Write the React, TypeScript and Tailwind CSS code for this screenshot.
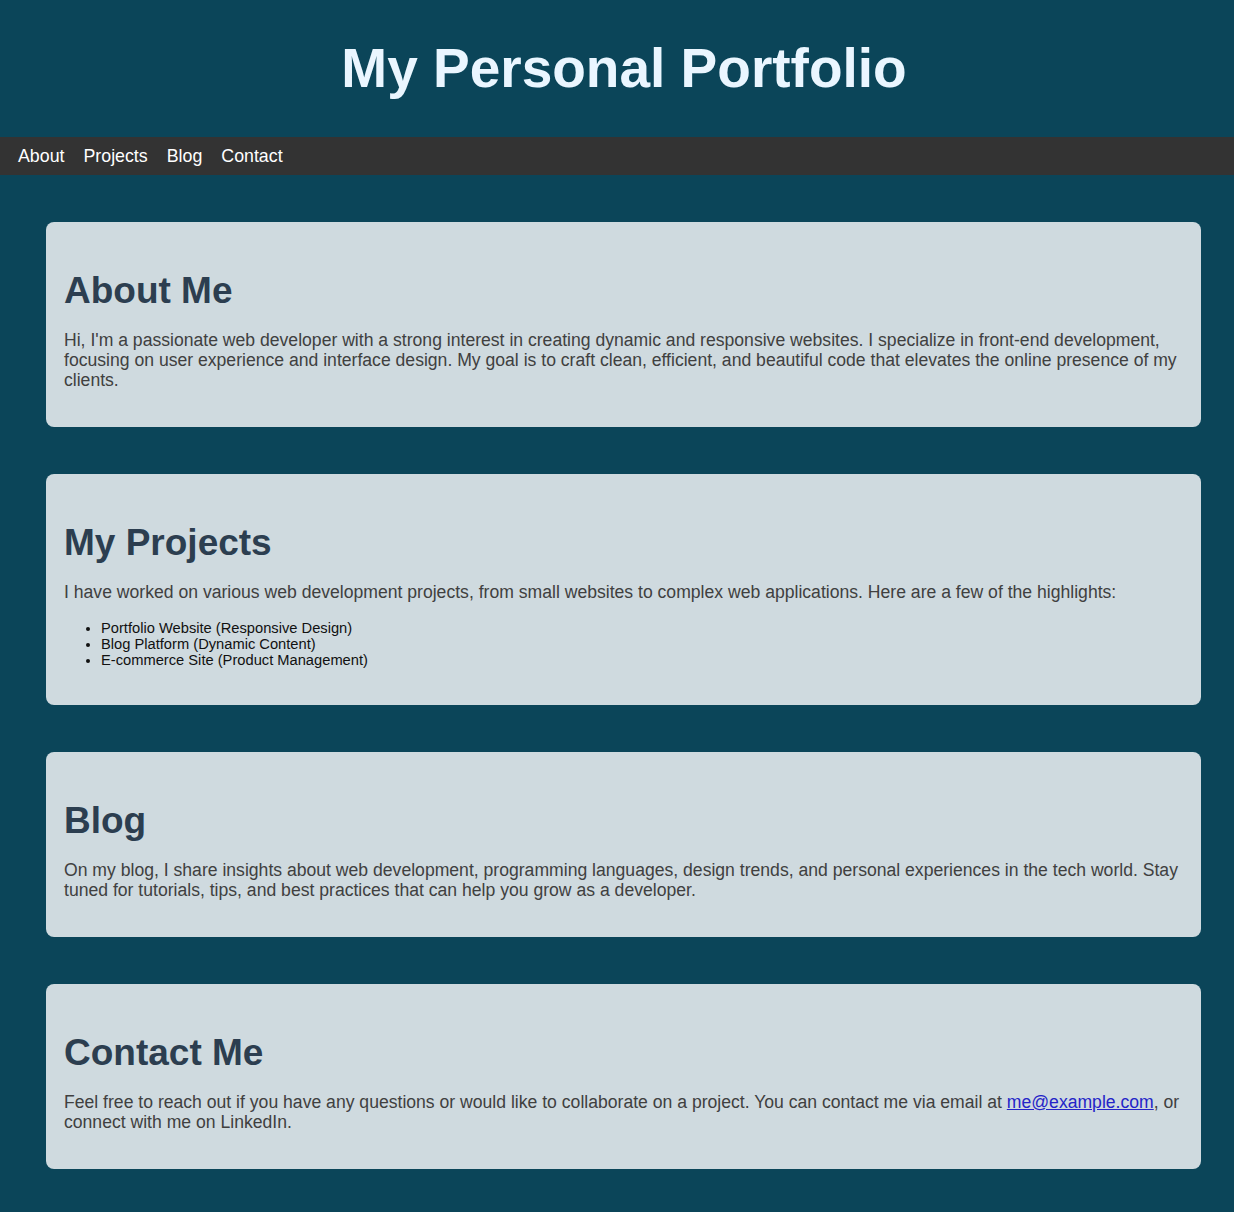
const navLinks = ['About', 'Projects', 'Blog', 'Contact'];

const projects = [
  'Portfolio Website (Responsive Design)',
  'Blog Platform (Dynamic Content)',
  'E-commerce Site (Product Management)',
];

function Section({ title, children }: { title: string; children: React.ReactNode }) {
  return (
    <section className="rounded-[8px] bg-[#cfdadf] px-[18px] pt-12 pb-[37px]">
      <h2 className="mb-[18px] text-[37px] font-bold leading-[42px] text-[#2c3e50]">{title}</h2>
      {children}
    </section>
  );
}

export default function App() {
  return (
    <div className="min-h-screen bg-[#0b4559] font-['Liberation_Sans',Arial,sans-serif]">
      {/* header */}
      <header className="flex h-[137px] items-center justify-center pl-[14px]">
        <h1 className="text-[55px] font-bold leading-none text-[#eaf6ff]">My Personal Portfolio</h1>
      </header>

      {/* nav */}
      <nav className="flex h-[38px] items-center gap-[19px] bg-[#333333] px-[18px]">
        {navLinks.map((link) => (
          <a key={link} href={`#${link.toLowerCase()}`} className="text-[17.8px] text-white">
            {link}
          </a>
        ))}
      </nav>

      <main className="flex flex-col gap-[47px] pl-[46px] pr-[33px] pt-[47px] pb-[38px]">
        <Section title="About Me">
          <p className="text-[17.6px] leading-[20px] text-[#404040]">
            Hi, I'm a passionate web developer with a strong interest in creating dynamic and responsive websites. I
            specialize in front-end development, focusing on user experience and interface design. My goal is to craft
            clean, efficient, and beautiful code that elevates the online presence of my clients.
          </p>
        </Section>

        <Section title="My Projects">
          <p className="text-[17.6px] leading-[20px] text-[#404040]">
            I have worked on various web development projects, from small websites to complex web applications. Here
            are a few of the highlights:
          </p>
          <ul className="mt-[18px] list-disc pl-[37px] text-[14.7px] leading-[16px] text-[#111]">
            {projects.map((p) => (
              <li key={p}>{p}</li>
            ))}
          </ul>
        </Section>

        <Section title="Blog">
          <p className="text-[17.6px] leading-[20px] text-[#404040]">
            On my blog, I share insights about web development, programming languages, design trends, and personal
            experiences in the tech world. Stay tuned for tutorials, tips, and best practices that can help you grow as
            a developer.
          </p>
        </Section>

        <Section title="Contact Me">
          <p className="text-[17.6px] leading-[20px] text-[#404040]">
            Feel free to reach out if you have any questions or would like to collaborate on a project. You can contact
            me via email at{' '}
            <a href="mailto:me@example.com" className="text-[#2424c8] underline">
              me@example.com
            </a>
            , or connect with me on LinkedIn.
          </p>
        </Section>
      </main>
    </div>
  );
}
